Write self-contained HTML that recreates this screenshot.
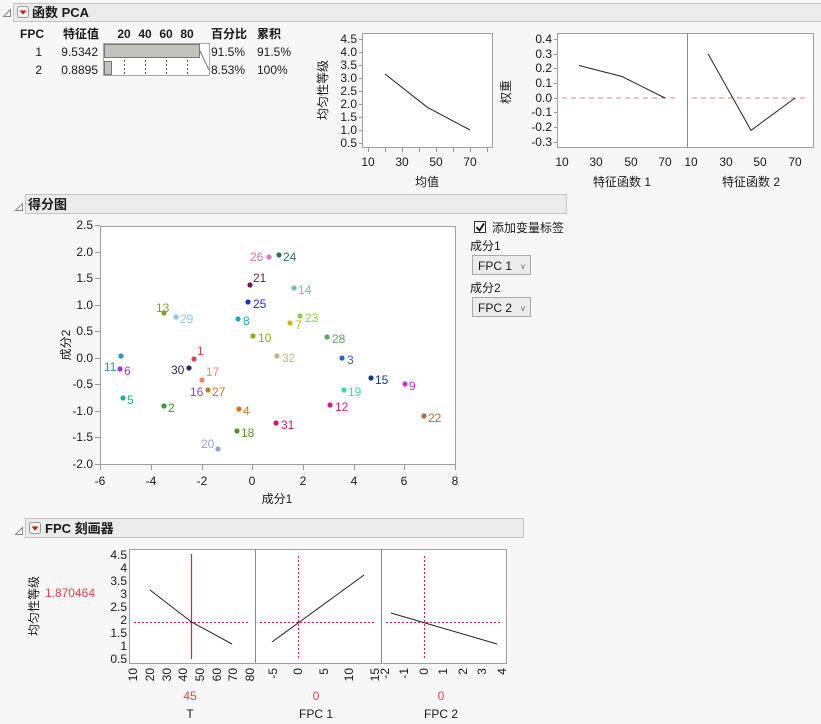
<!DOCTYPE html>
<html><head><meta charset="utf-8"><style>
body{margin:0;background:#f7f7f7;}
svg{display:block;font-family:"Liberation Sans","Noto Sans CJK SC",sans-serif;}
text{font-size:12px;fill:#1a1a1a;}
.b{font-weight:bold;}
.r{text-anchor:end;}
.m{text-anchor:middle;}
.fr{stroke:#a0a0a0;fill:#fff;}
.ln{stroke:#222;fill:none;stroke-width:1;}
.hb{fill:#ebebeb;stroke:#c4c4c4;}
.rt text{text-anchor:end;}
</style></head><body>
<svg width="821" height="724" viewBox="0 0 821 724">
<defs>
<g id="btn"><rect x="0.5" y="0.5" width="11" height="11" rx="2" fill="#f4f4f4" stroke="#9a9a9a"/><path d="M2.5 4.5 L9.5 4.5 L6 8.5Z" fill="#d01010"/></g>
<g id="dis"><path d="M0.5 7.5 L7.5 0.5 L7.5 7.5Z" fill="none" stroke="#888"/></g>
</defs>

<rect class="hb" x="13.5" y="3.5" width="808" height="18"/>
<use href="#dis" x="3" y="9"/>
<use href="#btn" x="17" y="6"/>
<text x="32" y="17" class="b" style="font-size:13px">函数 PCA</text>

<text x="20" y="38" class="b">FPC</text>
<text x="63" y="38" class="b">特征值</text>
<text x="124" y="38" class="b m">20</text><text x="145" y="38" class="b m">40</text><text x="166" y="38" class="b m">60</text><text x="187" y="38" class="b m">80</text>
<text x="211" y="38" class="b">百分比</text>
<text x="257" y="38" class="b">累积</text>
<rect x="103.5" y="43.5" width="106" height="32" fill="#fff" stroke="#a8a8a8"/>
<g stroke="#555" stroke-dasharray="2,2"><line x1="124.5" y1="44" x2="124.5" y2="75"/><line x1="145.5" y1="44" x2="145.5" y2="75"/><line x1="166.5" y1="44" x2="166.5" y2="75"/><line x1="187.5" y1="44" x2="187.5" y2="75"/></g>
<rect x="104.5" y="44.5" width="95" height="13" fill="#c4c3bb" stroke="#777"/>
<rect x="104.5" y="61.5" width="7" height="13" fill="#c4c3bb" stroke="#777"/>
<line x1="200" y1="51" x2="209" y2="70" stroke="#777"/>
<text x="42" y="56" class="r">1</text><text x="98" y="56" class="r">9.5342</text><text x="211" y="56">91.5%</text><text x="257" y="56">91.5%</text>
<text x="42" y="74" class="r">2</text><text x="98" y="74" class="r">0.8895</text><text x="211" y="74">8.53%</text><text x="257" y="74">100%</text>

<rect class="fr" x="362.5" y="33.5" width="130" height="114"/>
<g class="r">
<text x="357" y="43">4.5</text><text x="357" y="56">4.0</text><text x="357" y="69">3.5</text><text x="357" y="82">3.0</text><text x="357" y="95">2.5</text><text x="357" y="108">2.0</text><text x="357" y="121">1.5</text><text x="357" y="134">1.0</text><text x="357" y="147">0.5</text>
</g>
<g stroke="#999"><line x1="359" y1="39.5" x2="362" y2="39.5"/><line x1="359" y1="52.5" x2="362" y2="52.5"/><line x1="359" y1="65.5" x2="362" y2="65.5"/><line x1="359" y1="78.5" x2="362" y2="78.5"/><line x1="359" y1="91.5" x2="362" y2="91.5"/><line x1="359" y1="104.5" x2="362" y2="104.5"/><line x1="359" y1="117.5" x2="362" y2="117.5"/><line x1="359" y1="130.5" x2="362" y2="130.5"/><line x1="359" y1="143.5" x2="362" y2="143.5"/>
<line x1="368.5" y1="148" x2="368.5" y2="152"/><line x1="385.5" y1="148" x2="385.5" y2="152"/><line x1="402.5" y1="148" x2="402.5" y2="152"/><line x1="419.5" y1="148" x2="419.5" y2="152"/><line x1="436.5" y1="148" x2="436.5" y2="152"/><line x1="453.5" y1="148" x2="453.5" y2="152"/><line x1="470.5" y1="148" x2="470.5" y2="152"/><line x1="487.5" y1="148" x2="487.5" y2="152"/></g>
<text x="368" y="166" class="m">10</text><text x="402" y="166" class="m">30</text><text x="436" y="166" class="m">50</text><text x="470" y="166" class="m">70</text>
<text x="427" y="186" class="m">均值</text>
<text transform="translate(327,90) rotate(-90)" class="m">均匀性等级</text>
<polyline class="ln" points="385,74 427.5,107.4 470,130"/>

<rect class="fr" x="557.5" y="33.5" width="256" height="114"/>
<line x1="687.5" y1="33" x2="687.5" y2="147" stroke="#888"/>
<g class="r">
<text x="552" y="43">0.4</text><text x="552" y="58">0.3</text><text x="552" y="72">0.2</text><text x="552" y="87">0.1</text><text x="552" y="102">0.0</text><text x="552" y="116">-0.1</text><text x="552" y="131">-0.2</text><text x="552" y="146">-0.3</text>
</g>
<g stroke="#999"><line x1="554" y1="39.5" x2="557" y2="39.5"/><line x1="554" y1="54.5" x2="557" y2="54.5"/><line x1="554" y1="68.5" x2="557" y2="68.5"/><line x1="554" y1="83.5" x2="557" y2="83.5"/><line x1="554" y1="98.5" x2="557" y2="98.5"/><line x1="554" y1="112.5" x2="557" y2="112.5"/><line x1="554" y1="127.5" x2="557" y2="127.5"/><line x1="554" y1="142.5" x2="557" y2="142.5"/></g>
<g stroke="#e08080" stroke-dasharray="5,4"><line x1="562" y1="98" x2="677" y2="98"/><line x1="692" y1="98" x2="808" y2="98"/></g>
<polyline class="ln" points="579,65.5 622,76.5 665,98"/>
<polyline class="ln" points="708,53.7 751,130.4 795,98"/>
<text x="562" y="166" class="m">10</text><text x="596" y="166" class="m">30</text><text x="631" y="166" class="m">50</text><text x="665" y="166" class="m">70</text>
<text x="691" y="166" class="m">10</text><text x="726" y="166" class="m">30</text><text x="760" y="166" class="m">50</text><text x="795" y="166" class="m">70</text>
<text x="622" y="186" class="m">特征函数 1</text><text x="751" y="186" class="m">特征函数 2</text>
<text transform="translate(510,92) rotate(-90)" class="m">权重</text>

<rect class="hb" x="25.5" y="194.5" width="541" height="19"/>
<use href="#dis" x="15" y="203"/>
<text x="28" y="209" class="b" style="font-size:13px">得分图</text>

<rect x="474.5" y="221.5" width="11" height="11" fill="#fff" stroke="#333"/>
<path d="M476.5 227 L479.5 230.5 L484 223.5" stroke="#111" stroke-width="1.8" fill="none"/>
<text x="492" y="232">添加变量标签</text>
<text x="470" y="250">成分1</text>
<rect x="472.5" y="255.5" width="58" height="19" fill="#ececec" stroke="#aaa"/>
<text x="478" y="270">FPC 1</text><text x="521" y="269" style="font-size:8px;fill:#666">v</text>
<text x="470" y="292">成分2</text>
<rect x="472.5" y="297.5" width="58" height="19" fill="#ececec" stroke="#aaa"/>
<text x="478" y="312">FPC 2</text><text x="521" y="311" style="font-size:8px;fill:#666">v</text>

<rect class="fr" x="100.5" y="226.5" width="355" height="238"/>
<g class="r">
<text x="93" y="229">2.5</text><text x="93" y="256">2.0</text><text x="93" y="282">1.5</text><text x="93" y="309">1.0</text><text x="93" y="335">0.5</text><text x="93" y="362">0.0</text><text x="93" y="388">-0.5</text><text x="93" y="415">-1.0</text><text x="93" y="441">-1.5</text><text x="93" y="468">-2.0</text>
</g>
<g stroke="#999"><line x1="95" y1="225.5" x2="100" y2="225.5"/><line x1="95" y1="252.5" x2="100" y2="252.5"/><line x1="95" y1="278.5" x2="100" y2="278.5"/><line x1="95" y1="305.5" x2="100" y2="305.5"/><line x1="95" y1="331.5" x2="100" y2="331.5"/><line x1="95" y1="358.5" x2="100" y2="358.5"/><line x1="95" y1="384.5" x2="100" y2="384.5"/><line x1="95" y1="411.5" x2="100" y2="411.5"/><line x1="95" y1="437.5" x2="100" y2="437.5"/><line x1="95" y1="464.5" x2="100" y2="464.5"/>
<line x1="100.5" y1="465" x2="100.5" y2="470"/><line x1="151.5" y1="465" x2="151.5" y2="470"/><line x1="202.5" y1="465" x2="202.5" y2="470"/><line x1="252.5" y1="465" x2="252.5" y2="470"/><line x1="303.5" y1="465" x2="303.5" y2="470"/><line x1="354.5" y1="465" x2="354.5" y2="470"/><line x1="404.5" y1="465" x2="404.5" y2="470"/><line x1="455.5" y1="465" x2="455.5" y2="470"/></g>
<g class="m"><text x="100" y="485">-6</text><text x="151" y="485">-4</text><text x="202" y="485">-2</text><text x="252" y="485">0</text><text x="303" y="485">2</text><text x="354" y="485">4</text><text x="404" y="485">6</text><text x="455" y="485">8</text></g>
<text x="277" y="503" class="m">成分1</text>
<text transform="translate(70,345) rotate(-90)" class="m">成分2</text>

<g>
<circle cx="269" cy="257" r="2.6" fill="#d878b8"/><text x="250" y="261" style="fill:#d878b8">26</text>
<circle cx="279" cy="255" r="2.6" fill="#2f6f6a"/><text x="283" y="261" style="fill:#2f6f6a">24</text>
<circle cx="250" cy="285" r="2.6" fill="#6a1a5a"/><text x="253" y="282" style="fill:#6a1a5a">21</text>
<circle cx="294" cy="288" r="2.6" fill="#6cc49a"/><text x="298" y="294" style="fill:#6cc49a">14</text>
<circle cx="248" cy="302" r="2.6" fill="#2a2ad0"/><text x="253" y="308" style="fill:#2a2ad0">25</text>
<circle cx="164" cy="313" r="2.6" fill="#8a9a28"/><text x="156" y="312" style="fill:#8a9a28">13</text>
<circle cx="176" cy="317" r="2.6" fill="#88d0e0"/><text x="180" y="323" style="fill:#88d0e0">29</text>
<circle cx="238" cy="319" r="2.6" fill="#20a8b0"/><text x="243" y="325" style="fill:#20a8b0">8</text>
<circle cx="300" cy="316" r="2.6" fill="#80d840"/><text x="305" y="322" style="fill:#80d840">23</text>
<circle cx="290" cy="323" r="2.6" fill="#c8b820"/><text x="295" y="329" style="fill:#c8b820">7</text>
<circle cx="253" cy="336" r="2.6" fill="#98a818"/><text x="258" y="342" style="fill:#98a818">10</text>
<circle cx="327" cy="337" r="2.6" fill="#60a060"/><text x="332" y="343" style="fill:#60a060">28</text>
<circle cx="194" cy="359" r="2.6" fill="#e04050"/><text x="197" y="355" style="fill:#e04050">1</text>
<circle cx="277" cy="356" r="2.6" fill="#c0b888"/><text x="282" y="362" style="fill:#c0b888">32</text>
<circle cx="342" cy="358" r="2.6" fill="#3060d8"/><text x="347" y="364" style="fill:#3060d8">3</text>
<circle cx="121" cy="356" r="2.6" fill="#2098c8"/><text x="104" y="371" style="fill:#2098c8">11</text>
<circle cx="120" cy="369" r="2.6" fill="#a030e0"/><text x="124" y="375" style="fill:#a030e0">6</text>
<circle cx="189" cy="368" r="2.6" fill="#302858"/><text x="171" y="374" style="fill:#302858">30</text>
<circle cx="202" cy="380" r="2.6" fill="#e88870"/><text x="206" y="376" style="fill:#e88870">17</text>
<circle cx="208" cy="390" r="2.6" fill="#b88010"/><text x="190" y="396" style="fill:#9050a0">16</text><text x="212" y="396" style="fill:#b88010">27</text>
<circle cx="371" cy="378" r="2.6" fill="#103880"/><text x="375" y="384" style="fill:#103880">15</text>
<circle cx="405" cy="384" r="2.6" fill="#d030c8"/><text x="409" y="390" style="fill:#d030c8">9</text>
<circle cx="344" cy="390" r="2.6" fill="#30e0a0"/><text x="348" y="396" style="fill:#30e0a0">19</text>
<circle cx="123" cy="398" r="2.6" fill="#20b090"/><text x="127" y="404" style="fill:#20b090">5</text>
<circle cx="164" cy="406" r="2.6" fill="#30a030"/><text x="168" y="412" style="fill:#30a030">2</text>
<circle cx="330" cy="405" r="2.6" fill="#d82088"/><text x="335" y="411" style="fill:#d82088">12</text>
<circle cx="239" cy="409" r="2.6" fill="#d07820"/><text x="243" y="415" style="fill:#d07820">4</text>
<circle cx="424" cy="416" r="2.6" fill="#a87040"/><text x="428" y="422" style="fill:#a87040">22</text>
<circle cx="276" cy="423" r="2.6" fill="#d02060"/><text x="281" y="429" style="fill:#d02060">31</text>
<circle cx="237" cy="431" r="2.6" fill="#5a8a30"/><text x="241" y="437" style="fill:#5a8a30">18</text>
<circle cx="218" cy="449" r="2.6" fill="#98a0c8"/><text x="201" y="448" style="fill:#98a0c8">20</text>
</g>

<rect class="hb" x="25.5" y="518.5" width="498" height="19"/>
<use href="#dis" x="15" y="527"/>
<use href="#btn" x="29" y="522"/>
<text x="45" y="533" class="b" style="font-size:13px">FPC 刻画器</text>

<rect class="fr" x="129.5" y="549.5" width="377" height="114"/>
<line x1="255.5" y1="549" x2="255.5" y2="663" stroke="#888"/>
<line x1="381.5" y1="549" x2="381.5" y2="663" stroke="#888"/>
<g class="r">
<text x="127" y="559">4.5</text><text x="127" y="572">4</text><text x="127" y="585">3.5</text><text x="127" y="598">3</text><text x="127" y="611">2.5</text><text x="127" y="624">2</text><text x="127" y="637">1.5</text><text x="127" y="650">1</text><text x="127" y="663">0.5</text>
</g>
<text x="95" y="597" class="r" style="fill:#e8404a">1.870464</text>
<text transform="translate(38,606) rotate(-90)" class="m">均匀性等级</text>
<g style="stroke:#e02030" stroke-dasharray="2,2"><line x1="134" y1="622.5" x2="250" y2="622.5"/><line x1="260" y1="622.5" x2="375" y2="622.5"/><line x1="386" y1="622.5" x2="502" y2="622.5"/><line x1="298.5" y1="556" x2="298.5" y2="659"/><line x1="424.5" y1="556" x2="424.5" y2="659"/></g>
<line x1="191.5" y1="554" x2="191.5" y2="659" style="stroke:#e8202a;stroke-width:1.2"/>
<polyline class="ln" points="150,590 191.5,622 232,644"/>
<line class="ln" x1="272" y1="642" x2="364" y2="575"/>
<line class="ln" x1="391" y1="613" x2="497" y2="644"/>
<g class="rt">
<text transform="translate(137,668) rotate(-90)">10</text>
<text transform="translate(154,668) rotate(-90)">20</text>
<text transform="translate(171,668) rotate(-90)">30</text>
<text transform="translate(187,668) rotate(-90)">40</text>
<text transform="translate(204,668) rotate(-90)">50</text>
<text transform="translate(221,668) rotate(-90)">60</text>
<text transform="translate(237,668) rotate(-90)">70</text>
<text transform="translate(254,668) rotate(-90)">80</text>
<text transform="translate(277,668) rotate(-90)">-5</text>
<text transform="translate(302,668) rotate(-90)">0</text>
<text transform="translate(328,668) rotate(-90)">5</text>
<text transform="translate(353,668) rotate(-90)">10</text>
<text transform="translate(379,668) rotate(-90)">15</text>
<text transform="translate(389,668) rotate(-90)">-2</text>
<text transform="translate(408,668) rotate(-90)">-1</text>
<text transform="translate(428,668) rotate(-90)">0</text>
<text transform="translate(447,668) rotate(-90)">1</text>
<text transform="translate(467,668) rotate(-90)">2</text>
<text transform="translate(486,668) rotate(-90)">3</text>
<text transform="translate(506,668) rotate(-90)">4</text>
</g>
<text x="190" y="700" class="m" style="fill:#e8404a">45</text>
<text x="316" y="700" class="m" style="fill:#e8404a">0</text>
<text x="441" y="700" class="m" style="fill:#e8404a">0</text>
<text x="190" y="718" class="m">T</text>
<text x="316" y="718" class="m">FPC 1</text>
<text x="441" y="718" class="m">FPC 2</text>
</svg>
</body></html>
